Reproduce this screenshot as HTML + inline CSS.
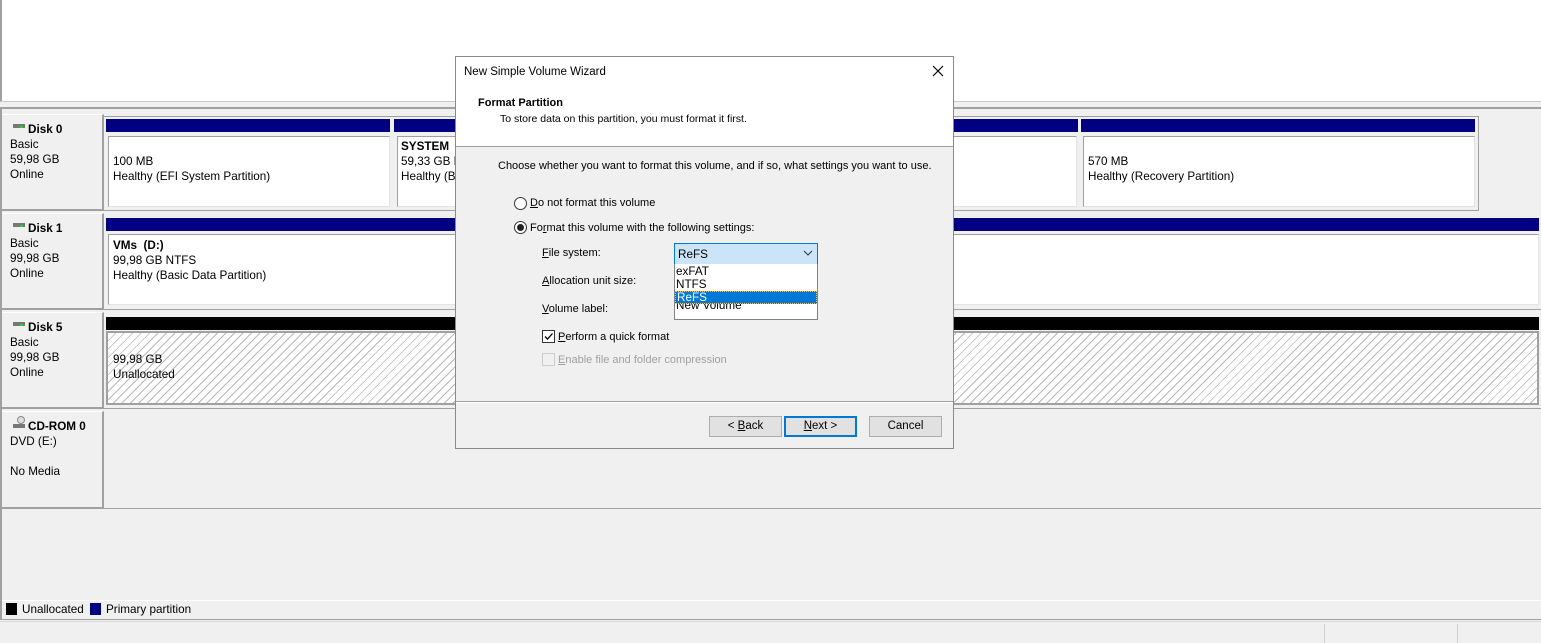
<!DOCTYPE html>
<html><head><style>
*{margin:0;padding:0;box-sizing:border-box}
body{width:1541px;height:643px;background:#f0f0f0;font-family:"Liberation Sans",sans-serif;font-size:11.7px;color:#000;position:relative;overflow:hidden}
.a{position:absolute}
.t{position:absolute;white-space:nowrap;line-height:15px}
.b{font-weight:bold}
.lbl{position:absolute;left:2px;width:102px;background:#f0f0f0;border-right:2px solid #a0a0a0;border-bottom:2px solid #a0a0a0;border-top:1px solid #fff}
.navy{position:absolute;background:#000080;height:13px}
.box{position:absolute;background:#fff;border:1px solid #a0a0a0;border-right-color:#e3e3e3;border-bottom-color:#e3e3e3}
.hat{background:repeating-linear-gradient(135deg,#fff 0 5px,#b8b8b8 5px 6px)}
.btn{position:absolute;height:21px;width:73px;background:#e1e1e1;border:1px solid #adadad;text-align:center;line-height:19px;font-size:11.5px}
.d{font-size:11px}
u{text-decoration:underline}
</style></head><body>
<div class="a" style="left:0;top:0;width:1541px;height:101px;background:#fff;border-left:2px solid #a0a0a0"></div>
<div class="a" style="left:0;top:101px;width:1541px;height:1px;background:#c8c8c8"></div>
<div class="a" style="left:0;top:107px;width:1541px;height:2px;background:#a0a0a0"></div>
<div class="a" style="left:0;top:109px;width:2px;height:511px;background:#a0a0a0"></div>

<!-- Disk 0 -->
<div class="lbl" style="top:114px;height:97px"></div>
<div class="a" style="left:13px;top:124px;width:12px;height:4px;background:#777"></div><div class="a" style="left:20px;top:126px;width:3px;height:2px;background:#3c3"></div>
<div class="t b" style="left:28px;top:122px">Disk 0</div>
<div class="t" style="left:10px;top:137px">Basic<br>59,98 GB<br>Online</div>
<div class="a" style="left:104px;top:116px;width:1375px;height:95px;border:1px solid #a0a0a0;border-left:none"></div>
<div class="navy" style="left:106px;top:119px;width:284px"></div>
<div class="navy" style="left:394px;top:119px;width:684px"></div>
<div class="navy" style="left:1081px;top:119px;width:394px"></div>
<div class="box" style="left:108px;top:136px;width:282px;height:71px"></div>
<div class="box" style="left:397px;top:136px;width:680px;height:71px"></div>
<div class="box" style="left:1083px;top:136px;width:392px;height:71px"></div>
<div class="t" style="left:113px;top:154px">100 MB<br>Healthy (EFI System Partition)</div>
<div class="t" style="left:401px;top:139px"><b>SYSTEM&nbsp; (C:)</b><br>59,33 GB NTFS<br>Healthy (Boot)</div>
<div class="t" style="left:1088px;top:154px">570 MB<br>Healthy (Recovery Partition)</div>

<!-- Disk 1 -->
<div class="lbl" style="top:213px;height:97px"></div>
<div class="a" style="left:13px;top:223px;width:12px;height:4px;background:#777"></div><div class="a" style="left:20px;top:225px;width:3px;height:2px;background:#3c3"></div>
<div class="t b" style="left:28px;top:221px">Disk 1</div>
<div class="t" style="left:10px;top:236px">Basic<br>99,98 GB<br>Online</div>
<div class="a" style="left:104px;top:309px;width:1437px;height:1px;background:#a0a0a0"></div>
<div class="navy" style="left:106px;top:218px;width:1433px"></div>
<div class="box" style="left:108px;top:234px;width:1431px;height:71px"></div>
<div class="t" style="left:113px;top:238px"><b>VMs&nbsp; (D:)</b><br>99,98 GB NTFS<br>Healthy (Basic Data Partition)</div>

<!-- Disk 5 -->
<div class="lbl" style="top:312px;height:97px"></div>
<div class="a" style="left:13px;top:322px;width:12px;height:4px;background:#777"></div><div class="a" style="left:20px;top:324px;width:3px;height:2px;background:#3c3"></div>
<div class="t b" style="left:28px;top:320px">Disk 5</div>
<div class="t" style="left:10px;top:335px">Basic<br>99,98 GB<br>Online</div>
<div class="a" style="left:104px;top:408px;width:1437px;height:1px;background:#a0a0a0"></div>
<div class="a" style="left:106px;top:317px;width:1433px;height:13px;background:#000"></div>
<div class="box hat" style="left:106px;top:331px;width:1433px;height:74px;border:2px solid #a0a0a0"></div>
<div class="t" style="left:113px;top:352px">99,98 GB<br>Unallocated</div>

<!-- CD-ROM -->
<div class="lbl" style="top:411px;height:98px"></div>
<div class="a" style="left:17px;top:416px;width:8px;height:8px;border:1px solid #888;border-radius:50%;background:#ddd"></div>
<div class="a" style="left:13px;top:424px;width:12px;height:4px;background:#777"></div>
<div class="t b" style="left:28px;top:419px">CD-ROM 0</div>
<div class="t" style="left:10px;top:434px">DVD (E:)<br><br>No Media</div>
<div class="a" style="left:104px;top:508px;width:1437px;height:1px;background:#a0a0a0"></div>

<!-- legend -->
<div class="a" style="left:2px;top:600px;width:1539px;height:1px;background:#fff"></div>
<div class="a" style="left:6px;top:603px;width:11px;height:12px;background:#000"></div>
<div class="t" style="left:22px;top:602px">Unallocated</div>
<div class="a" style="left:90px;top:603px;width:11px;height:12px;background:#000080"></div>
<div class="t" style="left:106px;top:602px">Primary partition</div>
<div class="a" style="left:0;top:619px;width:1541px;height:1px;background:#a0a0a0"></div>
<div class="a" style="left:0;top:621px;width:1541px;height:1px;background:#d8d8d8"></div>
<div class="a" style="left:1324px;top:624px;width:1px;height:19px;background:#d0d0d0"></div>
<div class="a" style="left:1457px;top:624px;width:1px;height:19px;background:#d0d0d0"></div>

<!-- Dialog -->
<div class="a" style="left:455px;top:56px;width:499px;height:393px;background:#f0f0f0;border:1px solid #8a8a8a"></div>
<div class="a" style="left:456px;top:57px;width:497px;height:89px;background:#fff"></div>
<div class="a" style="left:456px;top:146px;width:497px;height:1px;background:#a0a0a0"></div>
<div class="t" style="left:464px;top:65px;font-size:11.5px">New Simple Volume Wizard</div>
<svg class="a" style="left:932px;top:65px" width="12" height="12"><path d="M1 1L11 11M11 1L1 11" stroke="#000" stroke-width="1.2"/></svg>
<div class="t b d" style="left:478px;top:96px">Format Partition</div>
<div class="t" style="left:500px;top:112px;font-size:10.5px">To store data on this partition, you must format it first.</div>
<div class="t d" style="left:498px;top:159px">Choose whether you want to format this volume, and if so, what settings you want to use.</div>
<div class="a" style="left:514px;top:197px;width:13px;height:13px;border:1px solid #333;border-radius:50%;background:#fff"></div>
<div class="t d" style="left:530px;top:196px"><u>D</u>o not format this volume</div>
<div class="a" style="left:514px;top:221px;width:13px;height:13px;border:1px solid #333;border-radius:50%;background:#fff"></div>
<div class="a" style="left:517px;top:224px;width:7px;height:7px;border-radius:50%;background:#222"></div>
<div class="t d" style="left:530px;top:221px">Fo<u>r</u>mat this volume with the following settings:</div>
<div class="t d" style="left:542px;top:246px"><u>F</u>ile system:</div>
<div class="t d" style="left:542px;top:274px"><u>A</u>llocation unit size:</div>
<div class="t d" style="left:542px;top:302px"><u>V</u>olume label:</div>
<div class="a" style="left:674px;top:243px;width:144px;height:22px;background:#cce4f7;border:1px solid #0078d7"></div>
<div class="t" style="left:678px;top:247px">ReFS</div>
<svg class="a" style="left:803px;top:250px" width="10" height="6"><path d="M1 1L5 5L9 1" stroke="#333" fill="none"/></svg>
<div class="a" style="left:674px;top:264px;width:144px;height:56px;background:#fff;border:1px solid #828282;border-top:none"></div>
<div class="t" style="left:676px;top:300px;line-height:12px">New Volume</div>
<div class="t" style="left:676px;top:265px;line-height:13px">exFAT<br>NTFS</div>
<div class="a" style="left:675px;top:291px;width:142px;height:13px;background:#0078d7;border:1px dotted #f5c060"></div>
<div class="t" style="left:677px;top:291px;line-height:13px;color:#fff">ReFS</div>
<div class="a" style="left:542px;top:330px;width:13px;height:13px;border:1px solid #333;background:#fff"></div>
<svg class="a" style="left:543px;top:331px" width="11" height="11"><path d="M2 5.5L4.5 8L9.5 2.5" stroke="#000" stroke-width="1.3" fill="none"/></svg>
<div class="t d" style="left:558px;top:330px"><u>P</u>erform a quick format</div>
<div class="a" style="left:542px;top:353px;width:13px;height:13px;border:1px solid #ccc;background:#f0f0f0"></div>
<div class="t d" style="left:558px;top:353px;color:#a0a0a0"><u>E</u>nable file and folder compression</div>
<div class="a" style="left:456px;top:401px;width:497px;height:1px;background:#a0a0a0"></div>
<div class="a" style="left:456px;top:402px;width:497px;height:1px;background:#fff"></div>
<div class="btn" style="left:709px;top:416px">&lt; <u>B</u>ack</div>
<div class="btn" style="left:784px;top:416px;border:2px solid #0078d7;line-height:17px"><u>N</u>ext &gt;</div>
<div class="btn" style="left:869px;top:416px">Cancel</div>
</body></html>
